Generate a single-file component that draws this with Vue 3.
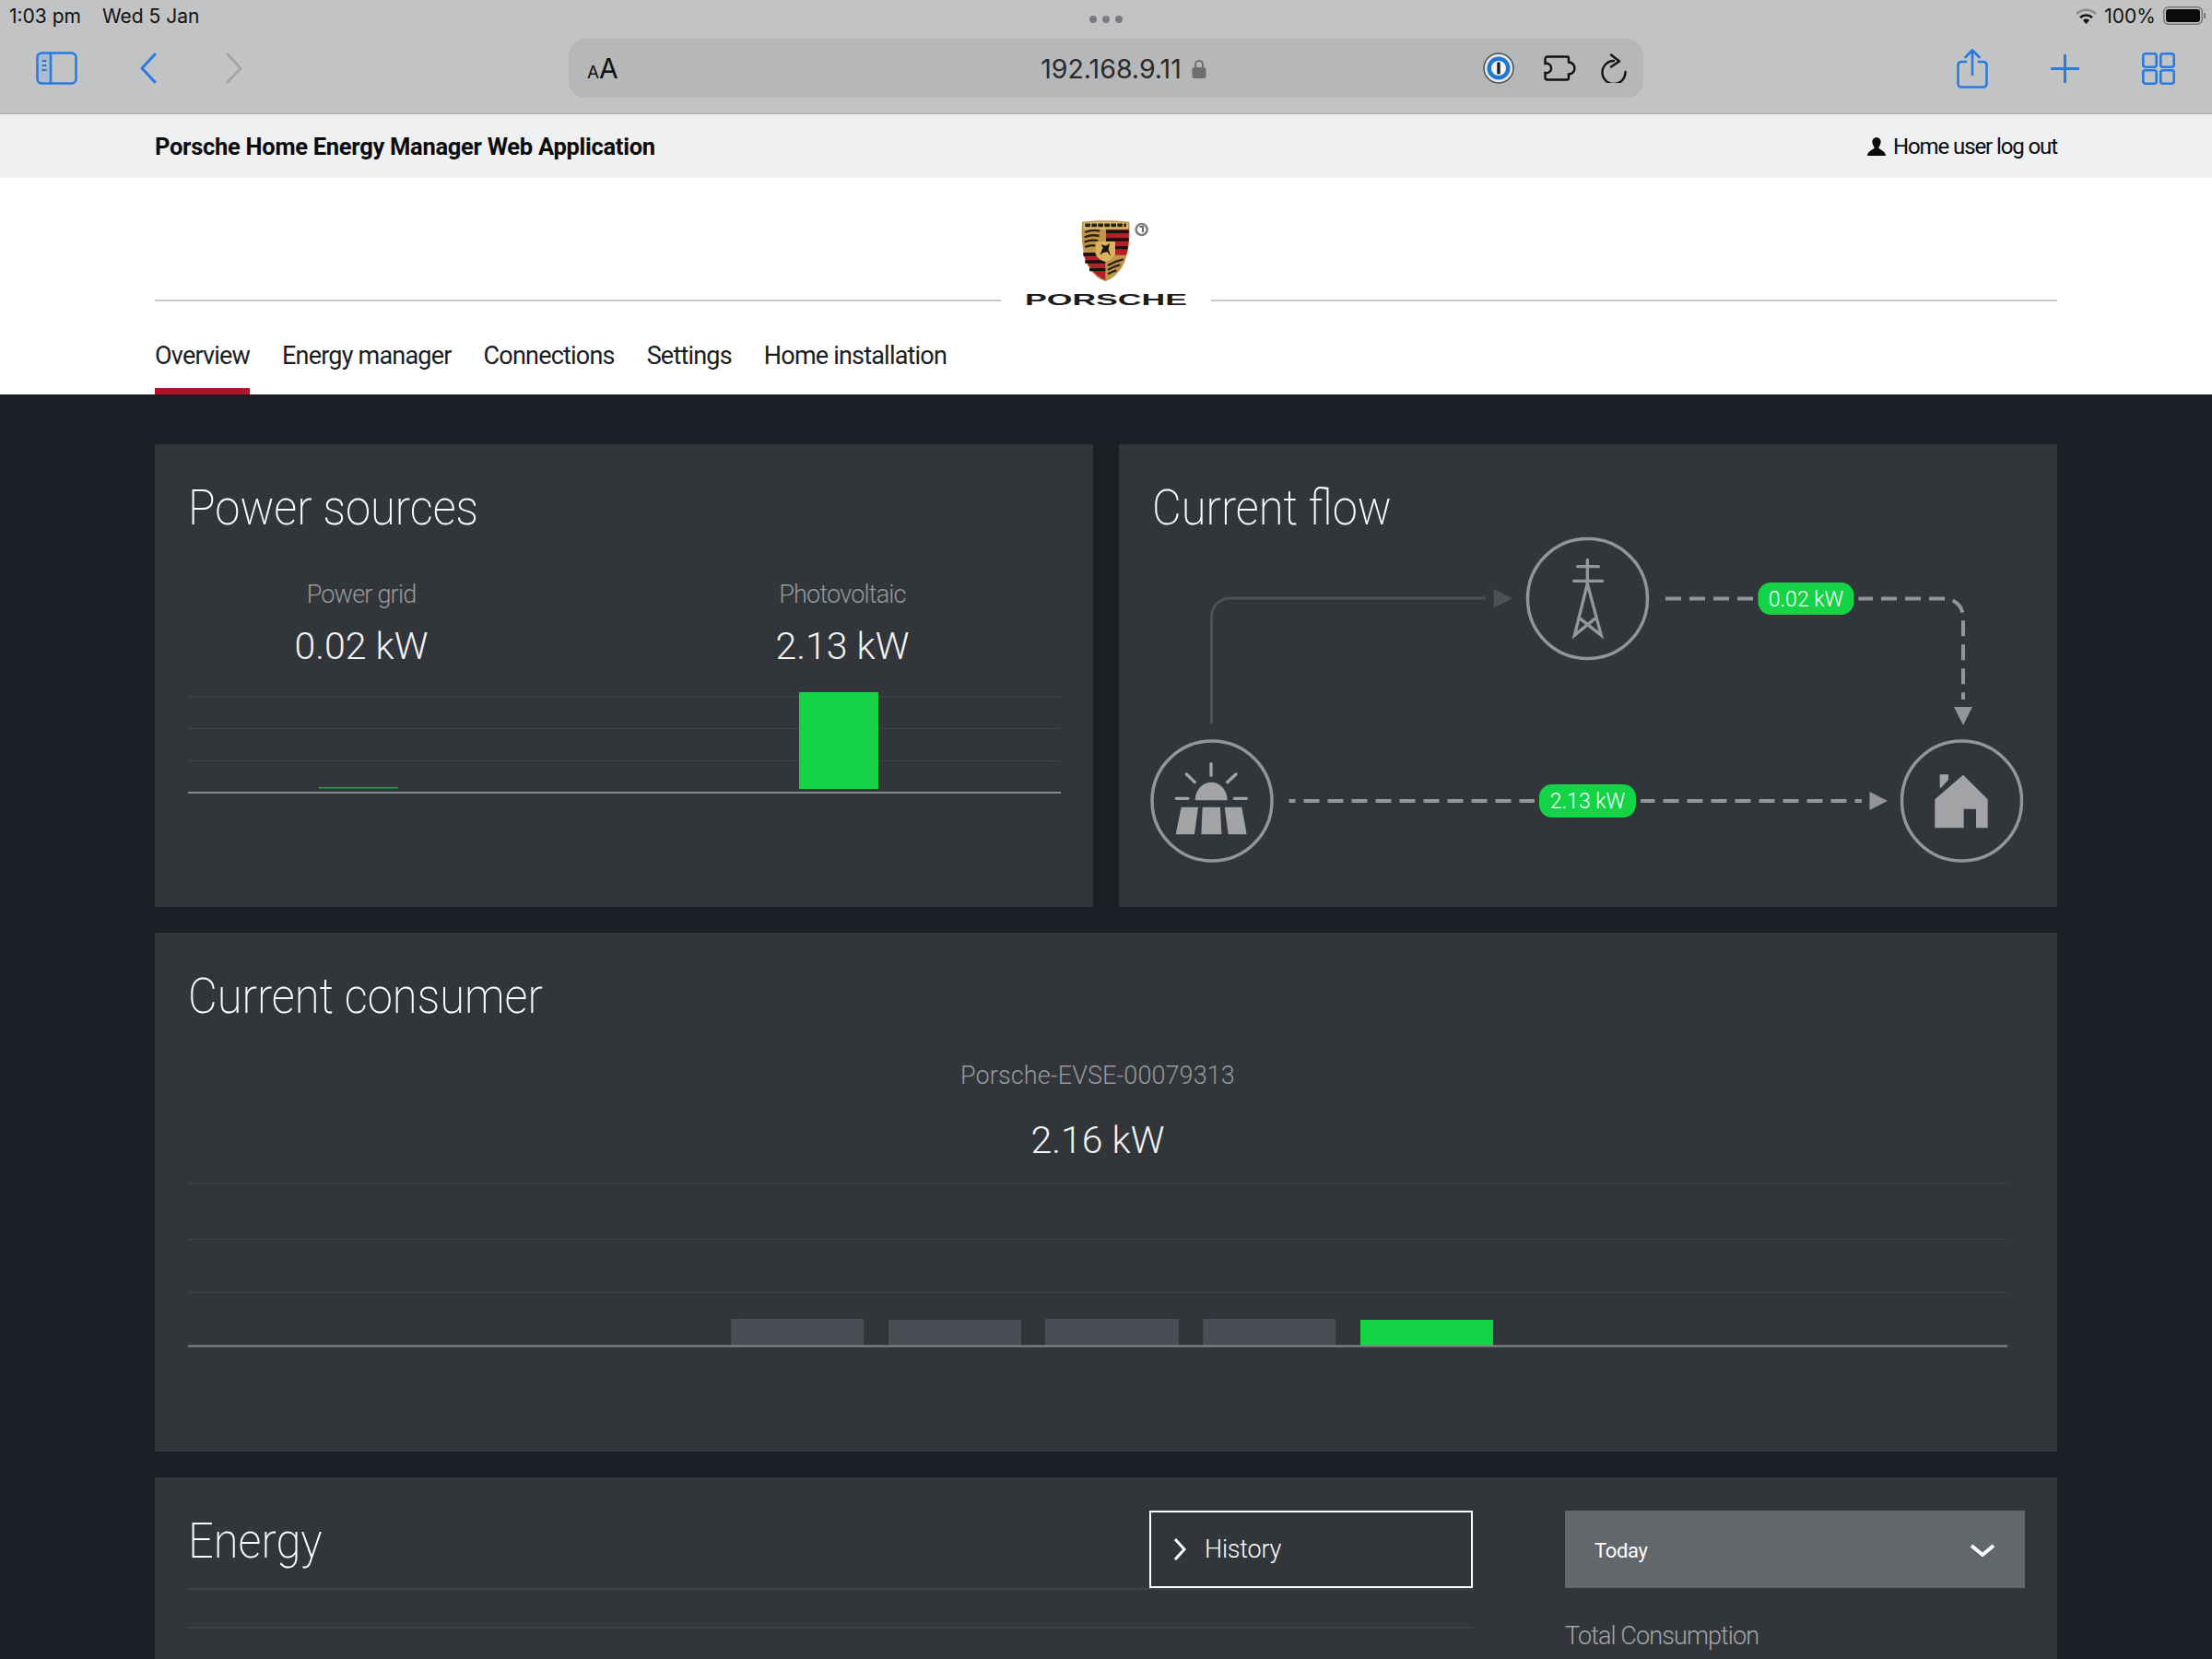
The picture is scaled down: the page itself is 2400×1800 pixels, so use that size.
<script setup>
const tabs = ['Overview', 'Energy manager', 'Connections', 'Settings', 'Home installation']
const consumerBars = [
  { x: 793, y: 1431, w: 144, h: 30, fill: '#4a4d53' },
  { x: 964, y: 1432, w: 144, h: 29, fill: '#4a4d53' },
  { x: 1134, y: 1431, w: 145, h: 30, fill: '#4a4d53' },
  { x: 1305, y: 1431, w: 144, h: 30, fill: '#4a4d53' },
  { x: 1476, y: 1432, w: 144, h: 28, fill: '#15d347' }
]
</script>

<template>
  <div class="page">
    <div class="safari">
      <div class="status">
        <div class="status-left"><span>1:03 pm</span><span>Wed 5 Jan</span></div>
        <div class="dots"><i></i><i></i><i></i></div>
        <div class="status-right">
          <svg width="23" height="17" viewBox="0 0 23 17"><path d="M1 6 A15 15 0 0 1 22 6" fill="none" stroke="#8b8c8e" stroke-width="2.6"/><path d="M5 10 A9.5 9.5 0 0 1 18 10" fill="none" stroke="#111" stroke-width="2.6"/><path d="M11.5 17 L8 13 A5 5 0 0 1 15 13 Z" fill="#111"/></svg>
          <span>100%</span>
          <svg width="46" height="20" viewBox="0 0 46 20"><rect x="0.75" y="0.75" width="41.5" height="18.5" rx="5" fill="none" stroke="#77787a" stroke-width="1.5"/><rect x="3" y="3" width="37" height="14" rx="3" fill="#0b0b0b"/><path d="M44 7 A3 3 0 0 1 44 13 Z" fill="#77787a"/></svg>
        </div>
      </div>
      <div class="toolbar">
        <div class="tools-left">
          <svg width="45" height="36" viewBox="0 0 45 36">
            <rect x="1.5" y="1.5" width="42" height="33" rx="5" fill="none" stroke="#2a7be0" stroke-width="2.6"/>
            <path d="M3 6 a3 3 0 0 1 3-3 h10 v30 h-10 a3 3 0 0 1-3-3 Z" fill="#a9bcd6"/>
            <path d="M16 2 V34" stroke="#2a7be0" stroke-width="2.6"/>
            <path d="M6.5 10 h5 M6.5 15 h5 M6.5 20 h5" stroke="#3d6fb8" stroke-width="2"/>
          </svg>
          <svg class="back" width="20" height="34" viewBox="0 0 20 34"><path d="M17 2 L3 17 L17 32" fill="none" stroke="#2a7be0" stroke-width="3" stroke-linecap="round" stroke-linejoin="round"/></svg>
          <svg class="forward" width="20" height="34" viewBox="0 0 20 34"><path d="M3 2 L17 17 L3 32" fill="none" stroke="#a4a5a7" stroke-width="3" stroke-linecap="round" stroke-linejoin="round"/></svg>
        </div>
        <div class="urlbar">
          <div class="aa"><span class="a-small">A</span><span class="a-big">A</span></div>
          <div class="address">
            <span>192.168.9.11</span>
            <svg width="16" height="21" viewBox="0 0 16 21"><path d="M4 9 V6 a4 4 0 0 1 8 0 V9" fill="none" stroke="#6d6e70" stroke-width="2"/><rect x="0.5" y="9" width="15" height="12" rx="2.5" fill="#6d6e70"/></svg>
          </div>
          <div class="url-tools">
            <svg width="34" height="34" viewBox="0 0 34 34"><circle cx="17" cy="17" r="16" fill="#e7e8ea" stroke="#4c4d4f" stroke-width="1.5"/><circle cx="17" cy="17" r="12.5" fill="#1d78d6"/><circle cx="17" cy="17" r="8" fill="#f2f4f6"/><rect x="15.3" y="10.5" width="3.4" height="13" rx="1" fill="#1d1d1f"/></svg>
            <svg class="puzzle" width="36" height="28" viewBox="0 0 36 28"><path d="M4 1.500 H25 a2 2 0 0 1 2 2 V7.500 a6.500 6.500 0 1 1 0 13 V24.500 a2 2 0 0 1-2 2 H4 a2.500 2.500 0 0 1-2.500-2.500 V19 a5.200 5.200 0 1 0 0-10 V4 A2.500 2.500 0 0 1 4 1.500 Z" fill="none" stroke="#111" stroke-width="2.4"/></svg>
            <svg class="reload" width="28" height="32" viewBox="0 0 28 32"><path d="M14 8 A12.5 12.5 0 1 0 26.500 20" fill="none" stroke="#111" stroke-width="2.4" stroke-linecap="round"/><path d="M11 1.500 L20 8.500 L11 14.500" fill="none" stroke="#111" stroke-width="2.4" stroke-linecap="round" stroke-linejoin="round"/></svg>
          </div>
        </div>
        <div class="tools-right">
          <svg width="34" height="43" viewBox="0 0 34 43"><path d="M11 14 H5 a3.5 3.5 0 0 0-3.5 3.5 V38 a3.5 3.5 0 0 0 3.5 3.5 H29 a3.5 3.5 0 0 0 3.5-3.5 V17.5 a3.5 3.5 0 0 0-3.5-3.5 H23" fill="none" stroke="#2a7be0" stroke-width="2.6"/><path d="M17 28 V2 M9.5 9 L17 1.5 L24.5 9" fill="none" stroke="#2a7be0" stroke-width="2.6" stroke-linecap="round" stroke-linejoin="round"/></svg>
          <svg class="plus" width="31" height="31" viewBox="0 0 31 31"><path d="M15.5 1 V30 M1 15.5 H30" stroke="#2a7be0" stroke-width="3" stroke-linecap="round"/></svg>
          <svg class="grid-tabs" width="36" height="35" viewBox="0 0 36 35"><rect x="1.3" y="1.3" width="14.4" height="14.4" rx="2.5" fill="none" stroke="#2a7be0" stroke-width="2.6"/><rect x="20.3" y="1.3" width="14.4" height="14.4" rx="2.5" fill="none" stroke="#2a7be0" stroke-width="2.6"/><rect x="1.3" y="19.3" width="14.4" height="14.4" rx="2.5" fill="none" stroke="#2a7be0" stroke-width="2.6"/><rect x="20.3" y="19.3" width="14.4" height="14.4" rx="2.5" fill="none" stroke="#2a7be0" stroke-width="2.6"/></svg>
        </div>
      </div>
    </div>

    <header class="app-strip">
      <strong>Porsche Home Energy Manager Web Application</strong>
      <div class="user">
        <svg width="20" height="20" viewBox="0 0 20 20"><path d="M10 0 a4.6 4.6 0 0 1 4.6 5 c0 3-1.8 5-2.4 6.2 C13 13.5 20 14.5 20 20 H0 C0 14.5 7 13.5 7.8 11.2 C7.200 10 5.400 8 5.400 5 A4.600 4.600 0 0 1 10 0 Z" fill="#0b0b0b"/></svg>
        <span>Home user log out</span>
      </div>
    </header>

    <section class="masthead">
      <div class="brand">
        <div class="rule"></div>
        <svg class="logo" width="228" height="98" viewBox="1086 237 228 98">
          <g transform="translate(1060 210) scale(0.3333)">
            <path d="M342 92 Q418 84 496 92 Q502 190 472 240 Q448 276 418 286 Q386 276 364 240 Q336 190 342 92 Z" fill="#bf9648"/>
            <path d="M346 96 Q418 88 492 96 L492 116 L346 116 Z" fill="#d9bb74"/>
            <path d="M352 103 H486" stroke="#2a2015" stroke-width="11" stroke-dasharray="17 4"/>
            <path d="M420 116 H494 Q496 170 486 200 H420 Z" fill="#b3202b"/>
            <path d="M420 124 H494 M420 150 H494 M420 176 H490" stroke="#17120e" stroke-width="10"/>
            <path d="M346 192 H418 V282 Q388 272 366 238 Q350 216 346 192 Z" fill="#b3202b"/>
            <path d="M346 198 H418 M352 222 H418 M366 248 H418" stroke="#17120e" stroke-width="10"/>
            <path d="M352 126 q24-10 48-4 M350 142 q24-10 48-4 M350 158 q24-10 44-4 M352 174 q18-8 34-4" fill="none" stroke="#2a2015" stroke-width="7"/>
            <path d="M426 234 q24-14 50-20 M426 248 q20-12 40-16 M426 262 q14-8 28-12" fill="none" stroke="#2a2015" stroke-width="7"/>
            <path d="M386 156 H450 V196 Q446 214 418 222 Q390 214 386 196 Z" fill="#d9b45e"/>
            <path d="M400 200 L410 176 L404 166 L420 170 L432 162 L428 182 L436 204 L424 190 L412 192 Z" fill="#1a140e"/>
            <circle cx="536" cy="117" r="18" fill="#fff" stroke="#808285" stroke-width="8"/>
            <path d="M530 108 h10 v18" fill="none" stroke="#666" stroke-width="6"/>
          </g>
          <text class="wordmark" x="1112" y="330.500" textLength="176" lengthAdjust="spacingAndGlyphs">PORSCHE</text>
        </svg>
        <div class="rule"></div>
      </div>
      <nav class="tabs">
        <a v-for="(t, i) in tabs" :key="t" :class="['tab', { active: i === 0 }]">{{ t }}</a>
      </nav>
    </section>

    <main class="content">
      <div class="row-two">
        <section class="card">
          <h2>Power sources</h2>
          <div class="sources">
            <div class="stat">
              <div class="label">Power grid</div>
              <div class="value">0.02 kW</div>
            </div>
            <div class="stat">
              <div class="label">Photovoltaic</div>
              <div class="value">2.13 kW</div>
            </div>
          </div>
          <svg class="chart-power" viewBox="204 745 947 120" width="947" height="120">
            <path d="M204 756 H1151 M204 790.500 H1151 M204 825.500 H1151" stroke="#3f4247" stroke-width="1.500"/>
            <rect x="867" y="751" width="86" height="105" fill="#15d347"/>
            <rect x="346" y="854" width="86" height="1.500" fill="#2f9c52"/>
            <path d="M204 860 H1151" stroke="#85878a" stroke-width="2"/>
          </svg>
        </section>

        <section class="card">
          <h2>Current flow</h2>
          <svg class="flow" viewBox="1214 574 1018 410" width="1018" height="410">
            <path d="M1314.500 785 V669 a20 20 0 0 1 20-20 H1612" fill="none" stroke="#4e5156" stroke-width="3"/>
            <path d="M1620.500 639 V659.500 L1641 649.500 Z" fill="#4e5156"/>
            <path class="dash" d="M1807 649.500 H2110 a20 20 0 0 1 20 20 V759"/>
            <path d="M2120 767 H2140 L2130 787 Z" fill="#939598"/>
            <path class="dash" d="M1398.500 869 H2020" stroke-dashoffset="10"/>
            <path d="M2028.500 859 V879 L2048 869 Z" fill="#939598"/>

            <g class="node">
              <circle cx="1722.500" cy="649.500" r="65"/>
              <circle cx="1315" cy="869" r="65"/>
              <circle cx="2128.500" cy="869" r="65"/>
            </g>

            <g transform="translate(1640 570) scale(0.3333)" fill="none" stroke="#959799" stroke-width="10" stroke-linecap="round">
              <path d="M247 112 V190 M215 134 H283 M203 181 H296 M247 190 L205 358 L270 305 M247 190 L292 358 L225 305"/>
            </g>

            <g transform="translate(1240 780) scale(0.3333)" fill="#a3a4a6">
              <path d="M222 146 V184 M142 180 L169 206 M303 180 L275 206 M109 259 H147 M298 259 H337" fill="none" stroke="#a3a4a6" stroke-width="10" stroke-linecap="round"/>
              <path d="M170 265 A52 58 0 0 1 275 265 Z"/>
              <path d="M125 287 H180 L168 376 H107 Z M194 287 H252 L256 376 H190 Z M266 287 H322 L338 376 H278 Z"/>
            </g>

            <g transform="translate(2040 780) scale(0.3333)" fill="#a3a4a6">
              <path d="M270 182 L350 262 V355 H312 V293 H272 V355 H178 V262 Z"/>
              <path d="M194 181 H222 V198 L198 224 H194 Z"/>
            </g>

            <rect class="pill" x="1907.500" y="632" width="104" height="35" rx="14"/>
            <text class="pill-text" x="1959.500" y="658">0.02 kW</text>
            <rect class="pill" x="1670" y="851" width="105" height="36" rx="14"/>
            <text class="pill-text" x="1722.500" y="877">2.13 kW</text>
          </svg>
        </section>
      </div>

      <section class="card consumer">
        <h2>Current consumer</h2>
        <div class="label consumer-label">Porsche-EVSE-00079313</div>
        <div class="value consumer-value">2.16 kW</div>
        <svg class="chart-consumer" viewBox="204 1275 1974 195" width="1974" height="195">
          <path d="M204 1284 H2178 M204 1344.500 H2178 M204 1402 H2178" stroke="#3f4247" stroke-width="1.500"/>
          <rect v-for="b in consumerBars" :key="b.x" :x="b.x" :y="b.y" :width="b.w" :height="b.h" :fill="b.fill"/>
          <path d="M204 1460.500 H2178" stroke="#85878a" stroke-width="2"/>
        </svg>
      </section>

      <section class="card energy">
        <div class="energy-left">
          <div class="energy-head">
            <h2>Energy</h2>
            <button class="history">
              <svg width="14" height="26" viewBox="0 0 14 26"><path d="M2 2 L12 13 L2 24" fill="none" stroke="#fff" stroke-width="3"/></svg>
              <span>History</span>
            </button>
          </div>
          <div class="energy-line"></div>
        </div>
        <div class="energy-right">
          <div class="select">
            <span>Today</span>
            <svg width="28" height="16" viewBox="0 0 28 16"><path d="M2 3 L14 13 L26 3" fill="none" stroke="#fff" stroke-width="4"/></svg>
          </div>
          <div class="total">Total Consumption</div>
        </div>
      </section>
    </main>
  </div>
</template>

<style scoped>
.page {
  width: 2400px;
  height: 1800px;
  overflow: hidden;
  background: #1c1f26;
  font-family: Roboto, "Liberation Sans", sans-serif;
}
svg { display: block; flex: none; }

.safari {
  height: 124px;
  box-sizing: border-box;
  background: #c2c3c5;
  border-bottom: 1px solid #a8a9ab;
  font-family: Inter, "Liberation Sans", sans-serif;
  color: #111;
}
.status {
  height: 34px;
  display: grid;
  grid-template-columns: 1fr auto 1fr;
  align-items: center;
  font-size: 21px;
}
.status-left { display: flex; gap: 23px; padding-left: 10px; }
.dots { display: flex; gap: 6px; padding-top: 8px; }
.dots i { width: 8px; height: 8px; border-radius: 50%; background: #7a7b7e; }
.status-right { display: flex; align-items: center; justify-content: flex-end; gap: 8px; padding-right: 7px; }
.toolbar {
  height: 89px;
  display: grid;
  grid-template-columns: 617px 1166px 1fr;
  align-items: start;
}
.tools-left { display: flex; align-items: center; height: 64px; margin-top: 8px; padding-left: 39px; }
.back { margin-left: 67px; }
.forward { margin-left: 73px; }
.urlbar {
  height: 64px;
  margin-top: 8px;
  border-radius: 18px;
  background: #b6b7b9;
  display: grid;
  grid-template-columns: 1fr auto 1fr;
  align-items: center;
  padding: 0 18px 0 20px;
  box-sizing: border-box;
}
.aa { display: flex; align-items: baseline; }
.a-small { font-size: 19px; }
.a-big { font-size: 30px; }
.address { display: flex; align-items: center; gap: 11px; margin-left: 36px; font-size: 28.500px; color: #2a2a2c; }
.url-tools { display: flex; align-items: center; justify-content: flex-end; }
.puzzle { margin-left: 32px; }
.reload { margin-left: 26px; }
.tools-right { display: flex; align-items: center; justify-content: flex-end; height: 64px; margin-top: 8px; padding-right: 40px; }
.plus { margin-left: 68px; }
.grid-tabs { margin-left: 68px; }

.app-strip {
  height: 69px;
  padding: 0 168px;
  background: #eff0f2;
  display: flex;
  align-items: center;
  justify-content: space-between;
  color: #0b0b0b;
}
.app-strip strong { font-size: 25.500px; font-weight: 700; letter-spacing: -0.28px; }
.user { display: flex; align-items: center; gap: 8px; font-size: 24px; letter-spacing: -1.1px; }

.masthead { height: 235px; box-sizing: border-box; background: #fff; padding: 44px 168px 0; }
.brand { display: flex; height: 98px; }
.rule { flex: 1; height: 2px; margin-top: 88px; background: #c9cacb; }
.wordmark {
  font-family: "Liberation Sans", sans-serif;
  font-weight: 700;
  font-size: 17px;
  fill: #1c1c1e;
}
.tabs { display: flex; gap: 35px; height: 93px; }
.tab {
  box-sizing: border-box;
  height: 93px;
  padding-top: 16px;
  border-bottom: 7px solid transparent;
  display: flex;
  align-items: center;
  font-size: 27px;
  letter-spacing: -0.8px;
  color: #1b1c1f;
}
.tab.active { border-bottom-color: #b5112a; }

.content { padding: 54px 168px 0; display: flex; flex-direction: column; gap: 28px; }
.row-two { display: grid; grid-template-columns: 1018px 1018px; gap: 28px; }
.card {
  background: #32353a;
  padding: 36px 35px 0 36px;
  box-sizing: border-box;
  color: #fff;
}
.row-two .card { height: 502px; }
h2 {
  margin: 0;
  font-size: 54px;
  line-height: 66px;
  font-weight: 200;
  color: #fff;
  transform: scaleX(0.905);
  transform-origin: left center;
}
.sources { display: grid; grid-template-columns: 376px 376px; column-gap: 146px; margin-top: 43px; }
.stat { text-align: center; }
.label { font-size: 27px; line-height: 36px; font-weight: 300; color: #97999c; }
.stat .label { letter-spacing: -0.8px; }
.value { font-size: 41px; line-height: 56px; font-weight: 300; margin-top: 10px; color: #f3f4f5; }
.chart-power { margin-top: 16px; }
.flow { margin: -10px 0 0 -36px; }
.dash { fill: none; stroke: #939598; stroke-width: 4; stroke-dasharray: 17 9; }
.node circle { fill: #32353a; stroke: #939598; stroke-width: 3.500; }
.pill { fill: #15d347; stroke: #32353a; stroke-width: 10; paint-order: stroke; }
.pill-text { fill: #fff; font-size: 23px; font-weight: 300; text-anchor: middle; }

.consumer { height: 563px; padding-right: 54px; }
.consumer-label { margin-top: 35px; text-align: center; letter-spacing: 0.1px; }
.consumer-value { margin-top: 24px; text-align: center; }
.chart-consumer { margin-top: 10px; }

.energy { height: 300px; display: flex; gap: 100px; }
.energy-left { width: 1394px; }
.energy-head {
  display: flex;
  justify-content: space-between;
  height: 84px;
  border-bottom: 2px solid #3d4045;
}
.history {
  width: 351px;
  height: 84px;
  box-sizing: border-box;
  background: transparent;
  border: 2px solid #fff;
  padding: 0 0 0 24px;
  display: flex;
  align-items: center;
  gap: 20px;
  color: #fff;
  font-family: inherit;
  font-size: 27px;
  font-weight: 300;
  letter-spacing: -0.2px;
}
.energy-line { height: 40px; border-bottom: 2px solid #3d4045; }
.energy-right { width: 499px; }
.select {
  height: 84px;
  box-sizing: border-box;
  padding: 2px 32px 0;
  background: #63666b;
  display: flex;
  align-items: center;
  justify-content: space-between;
  font-size: 22px;
  font-weight: 400;
  letter-spacing: -0.3px;
  color: #fff;
}
.total { margin-top: 34px; font-size: 27px; line-height: 36px; font-weight: 300; letter-spacing: -0.9px; color: #a3a5a7; }
</style>

<style>
body { margin: 0; background: #1c1f26; }
</style>
